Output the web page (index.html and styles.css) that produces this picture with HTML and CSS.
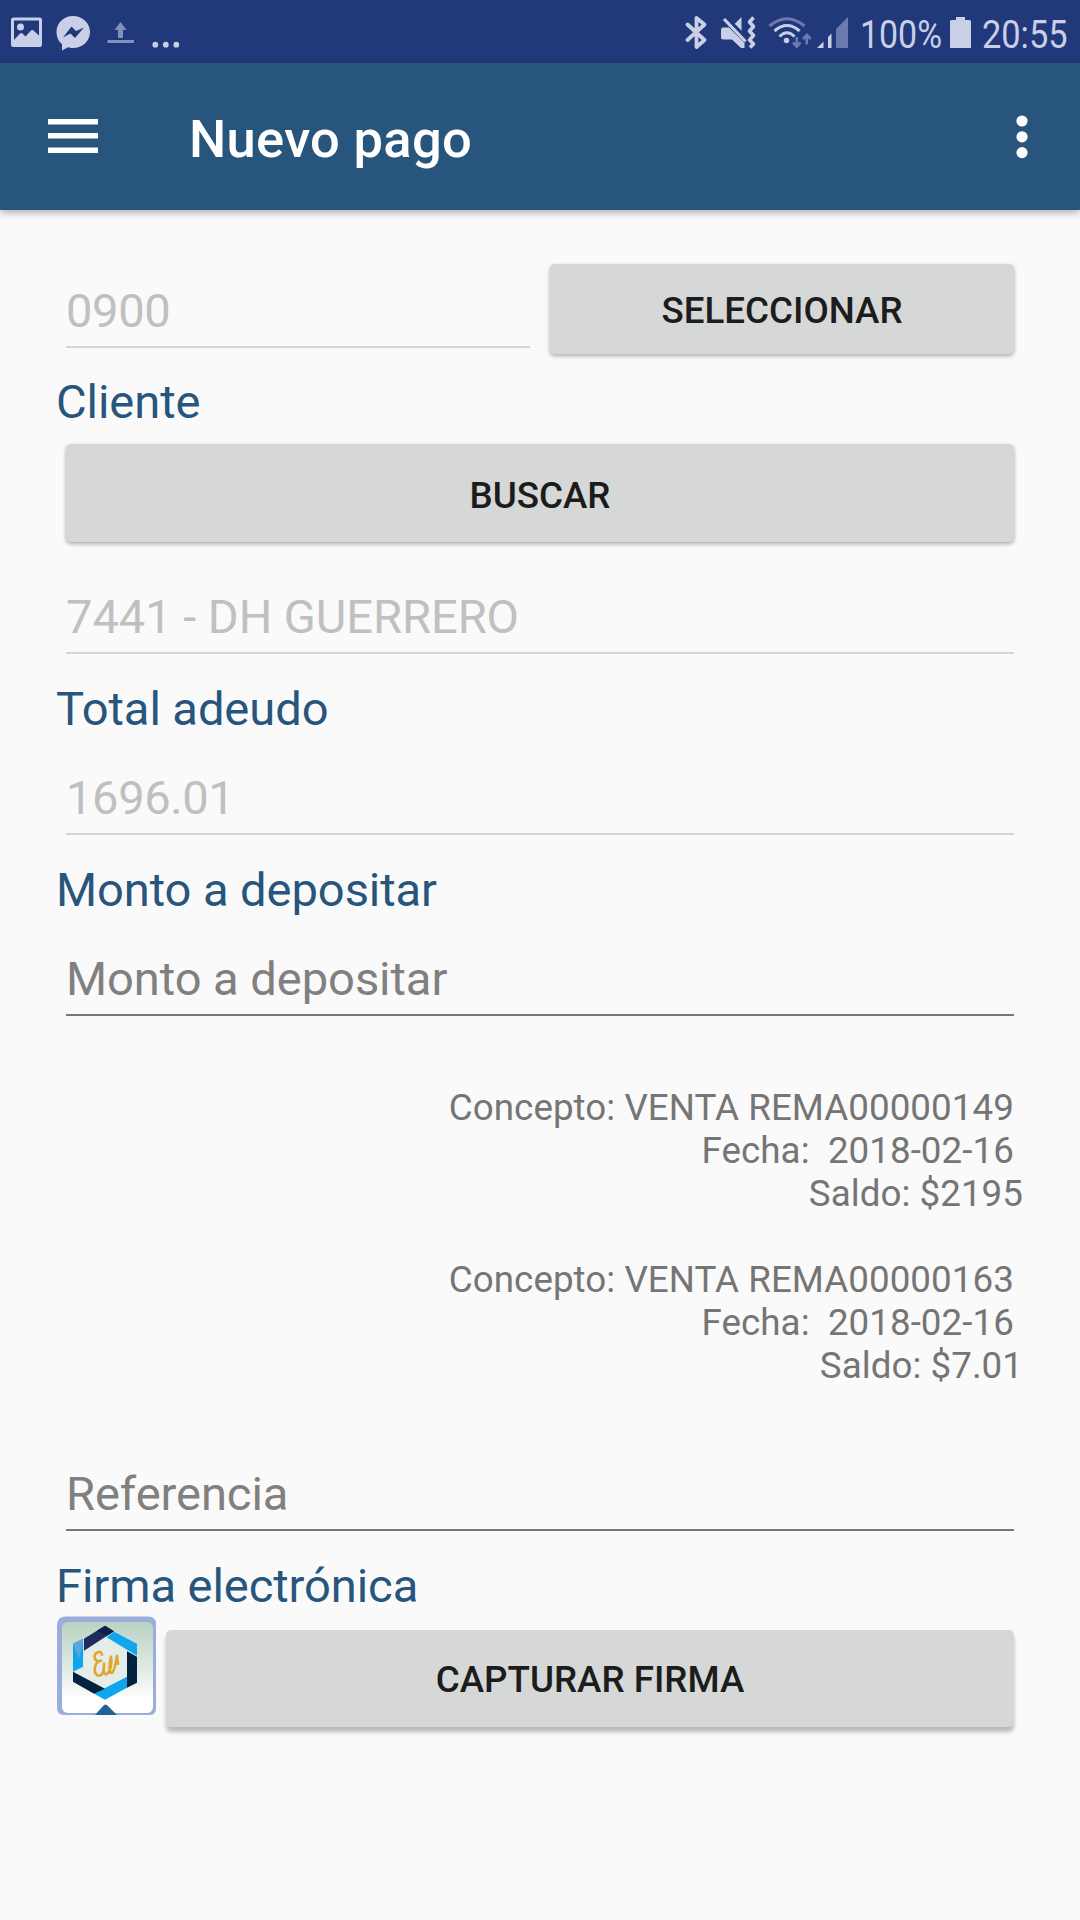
FILE: index.html
```html
<!DOCTYPE html>
<html lang="es">
<head>
<meta charset="utf-8">
<title>Nuevo pago</title>
<link rel="stylesheet" href="styles.css">
</head>
<body>
<header class="status">
  <svg class="status-left" width="200" height="63" viewBox="0 0 200 63" fill="#c9cfe6">
    <path fill-rule="evenodd" d="M13.500 17.500H39.500Q42 17.500 42 20V44.500Q42 47 39.500 47H13.500Q11 47 11 44.500V20Q11 17.500 13.500 17.500ZM14 20.500V40L20 33.500Q21.500 32.500 23 34L25.500 36.500L31 30.500Q32.500 29.500 34 31L39 35.500V20.500Z"/>
    <circle cx="20.500" cy="27" r="3.500"/>
    <path fill-rule="evenodd" d="M73 16C82.500 16 90 23 90 32S82.500 48 73 48C71 48 69.500 47.700 68 47.200L62 50.500V44.300C58.500 41.500 56.500 37 56.500 32C56.500 23 63.500 16 73 16ZM63 37.500L71.500 26.500L76 31L84 27.500L75 38L70.500 33.500Z"/>
    <path fill="#8290bd" d="M120.500 22L126.500 30H123V38H118V30H114.500ZM107.500 40H134V43H107.500Z"/>
    <circle cx="155.300" cy="44.700" r="2.900"/><circle cx="165.800" cy="44.700" r="2.900"/><circle cx="176.300" cy="44.700" r="2.900"/>
  </svg>
  <svg class="status-right" width="400" height="63" viewBox="680 0 400 63" fill="#c9cfe6">
    <path d="M687.500 24.500L704.500 40L696.500 47V18L704.500 24.500L687.500 40" fill="none" stroke="#c9cfe6" stroke-width="3.800" stroke-linejoin="round" stroke-linecap="round"/>
    <path d="M723 27.500H729L744.500 43V48H741L732 39.500H723Q721 39.500 721 37.500V29.500Q721 27.500 723 27.500ZM741.500 17V31L734.500 24Z"/>
    <path d="M725.500 18L747 40" fill="none" stroke="#21387b" stroke-width="5"/>
    <path d="M724 19L745.500 41.500" fill="none" stroke="#c9cfe6" stroke-width="3.200"/>
    <path d="M753.500 17.500L749.500 22L753.500 26.500L749.500 31L753.500 35.500L749.500 40L753.500 44L750 47.500" fill="none" stroke="#c9cfe6" stroke-width="3.600" stroke-linejoin="round"/>
    <g fill="none" stroke="#c9cfe6" stroke-width="3">
      <path stroke="#6b7bb0" d="M769.500 26Q787 11.500 804.500 26"/>
      <path d="M774.500 31Q787 20 799.500 31M779.500 36.500Q787 29 794.500 36.500"/>
    </g>
    <circle cx="786.500" cy="40.500" r="2.700"/>
    <g fill="none" stroke="#6b7bb0" stroke-width="2.600"><path d="M796.800 37V46M793 42.500L796.800 46.500L800.600 42.500M806.800 44.500V35.500M803 39L806.800 35L810.600 39"/></g>
    <path d="M817 48L823.500 41.500V48ZM828 37L831.500 33.500V48H828Z"/>
    <path fill="#6b7bb0" d="M836 29L848 17V48H836Z"/>
    <text class="status-text" x="860" y="48" textLength="82" lengthAdjust="spacingAndGlyphs">100%</text>
    <path d="M956 17H965V20H969.500Q971 20 971 21.500V48H950V21.500Q950 20 951.500 20H956Z"/>
    <text class="status-text" x="982" y="48" textLength="85.500" lengthAdjust="spacingAndGlyphs">20:55</text>
  </svg>
</header>
<nav class="appbar">
  <svg class="menu" width="50" height="36" viewBox="0 0 50 36" fill="#fff"><path d="M0 1H50V6.500H0ZM0 15H50V20.500H0ZM0 29.500H50V35H0Z"/></svg>
  <h1 class="title">Nuevo pago</h1>
  <svg class="more" width="12" height="44" viewBox="0 0 12 44" fill="#fff"><circle cx="6" cy="6" r="5.600"/><circle cx="6" cy="21.800" r="5.600"/><circle cx="6" cy="37.600" r="5.600"/></svg>
</nav>
<main class="form">
  <div class="row">
    <div class="field field-code numeric">0900</div>
    <button class="btn btn-select">SELECCIONAR</button>
  </div>
  <div class="label label-client">Cliente</div>
  <button class="btn btn-search">BUSCAR</button>
  <div class="field field-client">7441 - DH GUERRERO</div>
  <div class="label">Total adeudo</div>
  <div class="field numeric">1696.01</div>
  <div class="label">Monto a depositar</div>
  <div class="field editable">Monto a depositar</div>
  <div class="charges">Concepto: VENTA REMA00000149&nbsp;
Fecha:&nbsp; 2018-02-16&nbsp;
Saldo: $2195

Concepto: VENTA REMA00000163&nbsp;
Fecha:&nbsp; 2018-02-16&nbsp;
Saldo: $7.01</div>
  <div class="field editable field-ref">Referencia</div>
  <div class="label">Firma electrónica</div>
  <div class="signature">
    <svg class="badge" width="99" height="99" viewBox="0 0 99 99">
      <defs><linearGradient id="bg" x1="0" y1="0" x2="0" y2="1"><stop offset="0" stop-color="#b9d2c4"/><stop offset=".5" stop-color="#dfe9e2"/><stop offset=".85" stop-color="#fff"/></linearGradient></defs>
      <path fill="#9badda" d="M9 .5H91Q99 .5 99 8V92Q99 99 93 99H7Q0 99 0 92V9Q0 .5 9 .5Z"/>
      <rect x="5" y="6" width="91" height="91" rx="6" fill="url(#bg)"/>
      <g transform="translate(0 .8)">
        <path fill="#e4ede7" d="M48 20L70 34V62L48 75L27 62V34Z"/>
        <path fill="#1d2c59" d="M48 9L57 14.500L27 34V22Z"/>
        <path fill="#0a2149" d="M48 9L57 14.500L50 19L40 14Z"/>
        <path fill="#0fa5ef" d="M57 15L80 27V39L50 20.500ZM16 27L26 22V50L16 55ZM70 60V71L48 83L37 77Z"/>
        <path fill="#5aa7df" d="M16 27L26 22V26L22 42Z"/>
        <path fill="#022340" d="M70 34.500L80 40V66L70 71ZM16 55L48 72L37 77L16 65Z"/>
        <path fill="none" stroke="#e2a52d" stroke-width="2.600" stroke-linecap="round" stroke-linejoin="round" d="M45 38C44 32 36 36 38 42Q39 45 44 44C36 45 36 59 42 59C47 59 47 51 47 47C46 54 47 59 50 57C54 54 55 44 54 40C52 48 52 57 55 56C58 54 59 44 60 39L61 47"/>
      </g>
      <path fill="#1e6595" d="M38 99L46 90Q48.500 87 51 90L60 99Z"/>
    </svg>
    <button class="btn btn-sign">CAPTURAR FIRMA</button>
  </div>
</main>
</body>
</html>
```
FILE: styles.css
```css
* { box-sizing: border-box; }

body {
  margin: 0;
  width: 1080px;
  height: 1920px;
  overflow: hidden;
  background: #fafafa;
  font-family: Roboto, sans-serif;
}

svg { display: block; flex: none; }

.status {
  display: flex;
  justify-content: space-between;
  height: 63px;
  background: #21387b;
}

.status-text { font-size: 39.4px; }

.appbar {
  display: flex;
  align-items: center;
  height: 147px;
  padding: 0 52px 0 48px;
  background: #27557c;
  box-shadow: 0 2px 8px rgba(0, 0, 0, .35);
}

.menu { margin-bottom: 2px; }

.title {
  margin: 4px 0 0 91px;
  color: #fff;
  font-size: 52.5px;
  font-weight: 500;
  letter-spacing: .3px;
  line-height: 62px;
}

.more { margin-left: auto; }

.form {
  display: flex;
  flex-direction: column;
  padding: 53px 57px 0 56px;
}

.row { display: flex; gap: 20px; margin: 0 9px 0 10px; }

.field {
  height: 65px;
  margin: 34px 9px 0 10px;
  border-bottom: 2px solid #d5d5d5;
  color: #c0c0c0;
  font-size: 47.1px;
  letter-spacing: -.06px;
  line-height: 55px;
}

.field-code {
  width: 464px;
  margin: 20px 0 0;
}

.field-client { margin-top: 47px; }

.numeric { letter-spacing: -.4px; }

.editable {
  border-color: #767776;
  color: #808080;
}

.field-ref { margin-top: 79px; }

.label {
  height: 55px;
  margin-top: 27px;
  color: #27557c;
  font-size: 47.1px;
  letter-spacing: -.08px;
  line-height: 55px;
}

.label-client { margin-top: 20px; }

.btn {
  padding: 0;
  border: 0;
  border-radius: 5px;
  background: #d6d8d7;
  box-shadow: 0 2px 4px rgba(0, 0, 0, .32);
  color: #1b1c1b;
  font: 500 36.75px/43px Roboto, sans-serif;
}

.btn-select {
  width: 464px;
  height: 90px;
  margin-top: 1px;
  padding-top: 3px;
}

.btn-search {
  height: 98px;
  margin: 15px 9px 0 10px;
  padding-top: 4px;
}

.charges {
  margin: 70px 0 0;
  color: #757575;
  font-size: 36.75px;
  letter-spacing: .04px;
  line-height: 43px;
  text-align: right;
  white-space: pre-wrap;
}

.signature {
  display: flex;
  gap: 10px;
  margin: 3px 9px 0 1px;
}

.btn-sign {
  flex: 1;
  height: 97px;
  margin-top: 14px;
  padding-top: 2px;
  box-shadow: 0 5px 4px rgba(0, 0, 0, .26);
}
```
